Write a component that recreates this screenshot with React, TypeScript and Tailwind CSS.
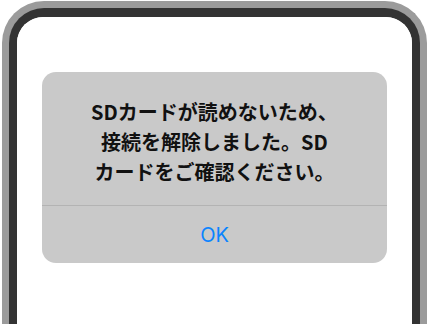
import React from 'react';

const App = () => {
  return (
    <div className="w-[428px] h-[324px] overflow-hidden bg-white" style={{ fontFamily: '"Noto Sans CJK JP", "Noto Sans", sans-serif' }}>
      {/* phone frame */}
      <div className="ml-[2px] mt-[1px] w-[425px] h-[400px] rounded-t-[42px] border-[7px] border-b-0 border-[#9b9b9b] bg-[#9b9b9b]">
        <div className="w-full h-full rounded-t-[35px] border-[8px] border-t-[9px] border-b-0 border-[#333333] bg-white">
          <div className="w-full h-full rounded-t-[26px] bg-white pt-[55px] pl-[25px]">
            {/* alert */}
            <div className="w-[345px] h-[191px] rounded-[14px] bg-[#c9c9c9] flex flex-col">
              <div className="pt-[25px] h-[134px] border-b border-[#b3b3b3] text-center text-[20px] leading-[30px] font-bold text-[#111]">
                SDカードが読めないため、<br />
                接続を解除しました。SD<br />
                カードをご確認ください。
              </div>
              <div className="flex-1 flex items-center justify-center text-[20px] text-[#0a84ff]" style={{ fontFamily: 'Inter, "Noto Sans", sans-serif' }}>
                OK
              </div>
            </div>
          </div>
        </div>
      </div>
    </div>
  );
};

export default App;
